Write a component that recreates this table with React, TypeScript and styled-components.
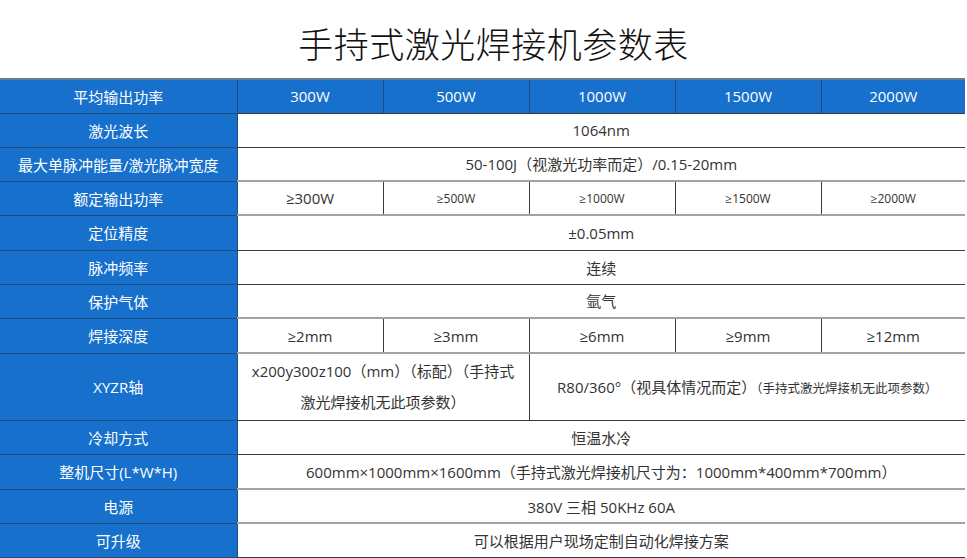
import React from 'react';
import styled, { createGlobalStyle, css } from 'styled-components';

const Blue = '#1670cc';
const BlueLine = '#1d4d80';
const DarkLine = '#3a3a3a';
const GrayLine = '#a3a3a3';

const GlobalStyle = createGlobalStyle`
  html, body {
    margin: 0;
    padding: 0;
    background: #fff;
  }
  body {
    font-family: "Open Sans", "Noto Sans CJK SC", sans-serif;
    color: #333;
  }
`;

const Page = styled.div`
  width: 967px;
  height: 558px;
  overflow: hidden;
  display: flex;
  flex-direction: column;
`;

const Title = styled.h1`
  margin: 0;
  height: 78px;
  display: flex;
  align-items: center;
  justify-content: center;
  font-family: "Noto Sans CJK SC", sans-serif;
  font-size: 35px;
  font-weight: 300;
  color: #111;
  letter-spacing: 0.5px;
  padding: 6px 0 0 20px;
  box-sizing: border-box;
`;

const Table = styled.table`
  width: 965px;
  table-layout: fixed;
  border-collapse: collapse;
  border-top: 2px solid #6b7a8a;
`;

type Line = 'dark' | 'gray';

const Row = styled.tr<{ $line: Line; $h: number }>`
  height: ${(p) => p.$h}px;

  > td {
    border-bottom: ${(p) =>
      p.$line === 'gray' ? `2px solid ${GrayLine}` : `1px solid ${DarkLine}`};
  }
  > td:first-child {
    border-bottom: 1px solid ${BlueLine};
  }
`;

const Cell = styled.td<{ $label?: boolean; $small?: boolean }>`
  padding: 0 6px;
  text-align: center;
  vertical-align: middle;
  font-size: ${(p) => (p.$small ? 12 : 15)}px;
  color: #333;
  white-space: nowrap;
  border-left: 1px solid ${DarkLine};

  ${(p) =>
    p.$label &&
    css`
      background: ${Blue};
      color: #fff;
      border-left: none;
      border-right: 1px solid ${BlueLine};
      font-size: 15px;
    `}
`;

const HeadCell = styled.td`
  background: ${Blue};
  color: #fff;
  text-align: center;
  font-size: 15px;
  border-left: 1px solid ${BlueLine};
  border-bottom: 1px solid ${BlueLine};
`;

const WrapCell = styled(Cell)`
  line-height: 31px;
`;

const Note = styled.span`
  font-size: 12.5px;
`;

const powers = ['300W', '500W', '1000W', '1500W', '2000W'];
const rated = ['≥300W', '≥500W', '≥1000W', '≥1500W', '≥2000W'];
const depth = ['≥2mm', '≥3mm', '≥6mm', '≥9mm', '≥12mm'];

const singles: { label: string; value: string; line: Line; h: number }[] = [
  { label: '激光波长', value: '1064nm', line: 'dark', h: 34 },
  {
    label: '最大单脉冲能量/激光脉冲宽度',
    value: '50-100J（视激光功率而定）/0.15-20mm',
    line: 'gray',
    h: 34,
  },
];

export default function App() {
  return (
    <Page>
      <GlobalStyle />
      <Title>手持式激光焊接机参数表</Title>
      <Table>
        <colgroup>
          <col style={{ width: 237 }} />
          <col style={{ width: 146 }} />
          <col style={{ width: 146 }} />
          <col style={{ width: 146 }} />
          <col style={{ width: 146 }} />
          <col style={{ width: 144 }} />
        </colgroup>
        <tbody>
          <Row $line="dark" $h={34}>
            <Cell $label>平均输出功率</Cell>
            {powers.map((p) => (
              <HeadCell key={p}>{p}</HeadCell>
            ))}
          </Row>
          {singles.map((r) => (
            <Row key={r.label} $line={r.line} $h={r.h}>
              <Cell $label>{r.label}</Cell>
              <Cell colSpan={5}>{r.value}</Cell>
            </Row>
          ))}
          <Row $line="gray" $h={34}>
            <Cell $label>额定输出功率</Cell>
            {rated.map((v, i) => (
              <Cell key={v} $small={i > 0}>
                {v}
              </Cell>
            ))}
          </Row>
          <Row $line="dark" $h={35}>
            <Cell $label>定位精度</Cell>
            <Cell colSpan={5}>±0.05mm</Cell>
          </Row>
          <Row $line="dark" $h={34}>
            <Cell $label>脉冲频率</Cell>
            <Cell colSpan={5}>连续</Cell>
          </Row>
          <Row $line="gray" $h={34}>
            <Cell $label>保护气体</Cell>
            <Cell colSpan={5}>氩气</Cell>
          </Row>
          <Row $line="gray" $h={35}>
            <Cell $label>焊接深度</Cell>
            {depth.map((v) => (
              <Cell key={v}>{v}</Cell>
            ))}
          </Row>
          <Row $line="dark" $h={67}>
            <Cell $label>XYZR轴</Cell>
            <WrapCell colSpan={2}>
              x200y300z100（mm）（标配）（手持式
              <br />
              激光焊接机无此项参数）
            </WrapCell>
            <Cell colSpan={3}>
              R80/360°（视具体情况而定）<Note>（手持式激光焊接机无此项参数）</Note>
            </Cell>
          </Row>
          <Row $line="dark" $h={34}>
            <Cell $label>冷却方式</Cell>
            <Cell colSpan={5}>恒温水冷</Cell>
          </Row>
          <Row $line="gray" $h={35}>
            <Cell $label>整机尺寸(L*W*H)</Cell>
            <Cell colSpan={5}>
              600mm×1000mm×1600mm（手持式激光焊接机尺寸为：1000mm*400mm*700mm）
            </Cell>
          </Row>
          <Row $line="gray" $h={34}>
            <Cell $label>电源</Cell>
            <Cell colSpan={5}>380V 三相 50KHz 60A</Cell>
          </Row>
          <Row $line="dark" $h={34}>
            <Cell $label>可升级</Cell>
            <Cell colSpan={5}>可以根据用户现场定制自动化焊接方案</Cell>
          </Row>
        </tbody>
      </Table>
    </Page>
  );
}
